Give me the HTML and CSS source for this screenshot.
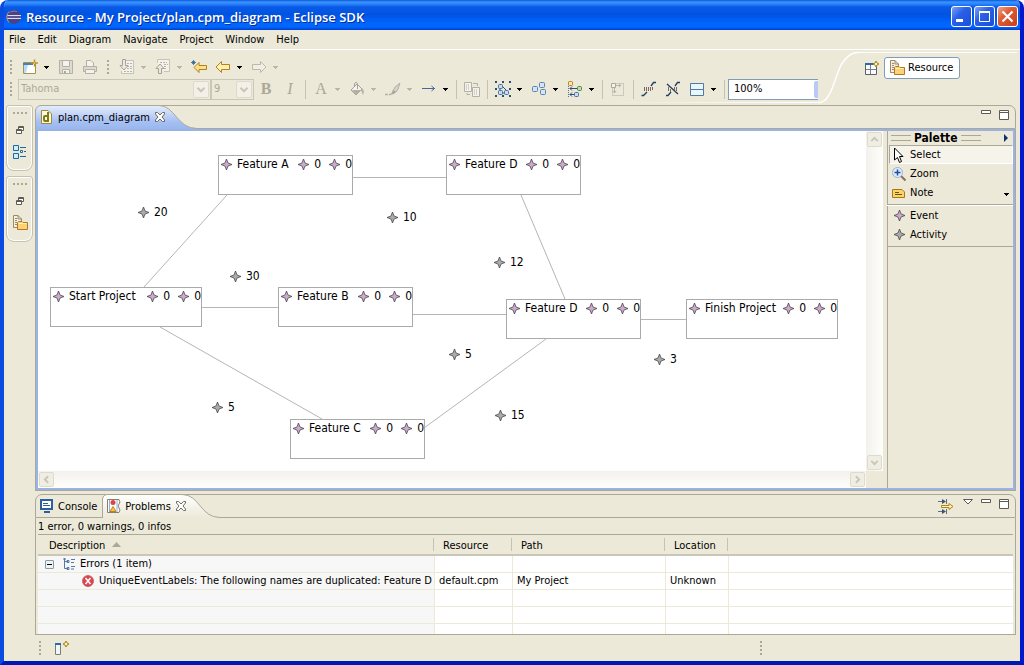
FILE: index.html
```html
<!DOCTYPE html>
<html lang="en">
<head>
    <meta charset="UTF-8">
    <meta name="viewport" content="width=device-width, initial-scale=1.0">
    <title>Resource - My Project/plan.cpm_diagram - Eclipse SDK</title>
    <link rel="stylesheet" href="styles.css">
</head>
<body>
    <!-- shared icons -->
    <svg class="sprite" aria-hidden="true">
        <symbol id="star" viewBox="0 0 11 11">
            <path d="M5.5 0L7 4L11 5.5L7 7L5.5 11L4 7L0 5.5L4 4Z" fill="currentColor" stroke="#4a464c" stroke-width="0.8"/>
            <path d="M5.5 3L8 5.5L5.5 8L3 5.5Z" fill="currentColor"/>
        </symbol>
        <symbol id="drop" viewBox="0 0 5 3">
            <path d="M0 0H5V1H4V2H3V3H2V2H1V1H0Z" fill="currentColor"/>
        </symbol>
        <symbol id="chevron" viewBox="0 0 16 16">
            <path d="M4 6L8 10L12 6" fill="none" stroke="currentColor" stroke-width="2.4"/>
        </symbol>
        <symbol id="close" viewBox="0 0 12 12">
            <path d="M1.5 1.5H3.5L6 4L8.5 1.5H10.5V3L8 6L10.5 9V10.5H8.5L6 8L3.5 10.5H1.5V9L4 6L1.5 3Z" fill="#fff" stroke="#5d5c52" stroke-width="0.9"/>
        </symbol>
        <symbol id="min" viewBox="0 0 10 4">
            <path d="M0.5 0.5H9.5V3.5H0.5Z" fill="#fff" stroke="#5d5c52"/>
        </symbol>
        <symbol id="max" viewBox="0 0 10 10">
            <path d="M0.5 0.5H9.5V9.5H0.5ZM0.5 2.5H9.5" fill="#fff" stroke="#5d5c52"/>
        </symbol>
        <symbol id="restore" viewBox="0 0 8 8">
            <path d="M2.5 0.5H7.5V4.5H2.5ZM2.5 1.5H7.5" fill="#fff" stroke="#5d5c52"/>
            <path d="M0.5 3.5H5.5V7.5H0.5ZM0.5 4.5H5.5" fill="#fff" stroke="#5d5c52"/>
        </symbol>
        <symbol id="resource" viewBox="0 0 16 16">
            <path d="M1.5 0.5H6L9.5 4V12.5H1.5Z" fill="#f4efdf" stroke="#a18a56"/>
            <path d="M6 0.5V4H9.5M3 3.5H5M3 5.5H5M3 7.5H5M3 9.5H5" fill="none" stroke="#8d8a80"/>
            <path d="M5.5 7.500L6.500 6.500H10L11 7.500H15.500V14.500H5.500Z" fill="#fbd375" stroke="#b3772a"/>
            <path d="M6.500 8.500H14.500" stroke="#fff0b8"/>
        </symbol>
    </svg>

    <div class="window">
        <header class="titlebar">
            <svg class="logo" viewBox="0 0 16 16">
                <circle cx="8" cy="8" r="7" fill="#4a4383"/>
                <path d="M3 4A7 7 0 0 1 12 3Q7 1 3 4Z" fill="#b5b0d8"/>
                <path d="M1 6.500H15M1 9.500H15" stroke="#dcdcf0"/>
                <path d="M1 8H15" stroke="#6c639f"/>
                <path d="M3 2.500A8 8 0 0 0 3 13.500" fill="none" stroke="#c28b8a"/>
            </svg>
            <h1>Resource - My Project/plan.cpm_diagram - Eclipse SDK</h1>
            <div class="window-buttons">
                <button aria-label="Minimize"><svg viewBox="0 0 19 19"><path d="M4 12H11V15H4Z" fill="#fff"/></svg></button>
                <button aria-label="Maximize"><svg viewBox="0 0 19 19"><path d="M4.500 5H14.500V14.500H4.500Z" fill="none" stroke="#fff"/><path d="M4 5H15" stroke="#fff" stroke-width="2"/></svg></button>
                <button class="close" aria-label="Close"><svg viewBox="0 0 19 19"><path d="M4.500 4.500L14.500 14.500M14.500 4.500L4.500 14.500" stroke="#fff" stroke-width="2.200"/></svg></button>
            </div>
        </header>

        <nav class="menubar">
            <a href="#">File</a>
            <a href="#">Edit</a>
            <a href="#">Diagram</a>
            <a href="#">Navigate</a>
            <a href="#">Project</a>
            <a href="#">Window</a>
            <a href="#">Help</a>
        </nav>

        <div class="coolbar">
            <div class="toolbars">
                <div class="toolbar">
                    <span class="grip"></span>
                    <button class="tool" aria-label="New">
                        <svg viewBox="0 0 16 16"><path d="M1.500 3.500H13.500V14.500H1.500Z" fill="#fff" stroke="#a5914c"/><path d="M1 4H11V6H1Z" fill="#3f82c4"/><path d="M2 6H6L4 14H2Z" fill="#b7dcf5"/><path d="M12.500 0.500V7.500M9 4H16" stroke="#c09222" stroke-width="1.500"/><path d="M12 3.500H13V4.500H12Z" fill="#fff3ae"/></svg>
                    </button>
                    <button class="arrow" aria-label="New menu"><svg><use href="#drop"/></svg></button>
                    <button class="tool off" aria-label="Save" disabled>
                        <svg viewBox="0 0 16 16"><path d="M1.500 1.500H14.500V14.500H1.500Z" fill="#dddbd0" stroke="#b3b1a6"/><path d="M4.500 1.500H11.500V7.500H4.500Z" fill="#f3f2ec" stroke="#b3b1a6"/><path d="M4.500 10.500H11.500V14.500H4.500Z" fill="#f3f2ec" stroke="#b3b1a6"/><path d="M6 12H8V14H6Z" fill="#a9a79c"/></svg>
                    </button>
                    <button class="tool off" aria-label="Print" disabled>
                        <svg viewBox="0 0 16 16"><path d="M4.500 7.500V1.500H9L11.500 4V7.500Z" fill="#f3f2ec" stroke="#b3b1a6"/><path d="M1.500 7.500H14.500V12.500H1.500Z" fill="#dddbd0" stroke="#b3b1a6"/><path d="M3.500 10.500H12.500V14.500H3.500Z" fill="#f3f2ec" stroke="#b3b1a6"/></svg>
                    </button>
                    <span class="grip mid"></span>
                    <button class="tool off" aria-label="Next annotation" disabled>
                        <svg viewBox="0 0 16 16"><path d="M5.500 1.500H14.500V14.500H2.500V12" fill="#f3f2ec" stroke="#c5c2b6"/><path d="M8 4.500H13M8 7.500H13M8 9.500H13M5 12.500H13" stroke="#b8b5a8" stroke-dasharray="2 1"/><path d="M3.500 0.500H6.500V6.500H9L5 11L1 6.500H3.500Z" fill="#eceadf" stroke="#a5a398"/></svg>
                    </button>
                    <button class="arrow off" aria-label="Next annotation menu" disabled><svg><use href="#drop"/></svg></button>
                    <button class="tool off" aria-label="Previous annotation" disabled>
                        <svg viewBox="0 0 16 16"><path d="M2.500 4V0.500H14.500V12.500H9" fill="#f3f2ec" stroke="#c5c2b6"/><path d="M5 3.500H12M9 5.500H13M9 7.500H12M9 9.500H12" stroke="#b8b5a8" stroke-dasharray="2 1"/><path d="M3.500 14.500V9.500H1L5 5L9 9.500H6.500V14.500Z" fill="#eceadf" stroke="#a5a398"/></svg>
                    </button>
                    <button class="arrow off" aria-label="Previous annotation menu" disabled><svg><use href="#drop"/></svg></button>
                    <button class="tool" aria-label="Last edit location">
                        <svg viewBox="0 0 16 16"><path d="M3 8.500L8 3.500V6.500H15.500V10.500H8V13.500Z" fill="#fde18a" stroke="#b3811e"/><path d="M2.500 1V6M0 3.500H5M1 2L4 5M4 2L1 5" stroke="#27618f" stroke-width="0.800"/></svg>
                    </button>
                    <button class="tool" aria-label="Back">
                        <svg viewBox="0 0 16 16"><path d="M1 8L6.500 2.500V5.500H14.500V10.500H6.500V13.500Z" fill="#fdf0b0" stroke="#b3811e"/></svg>
                    </button>
                    <button class="arrow" aria-label="Back menu"><svg><use href="#drop"/></svg></button>
                    <button class="tool off" aria-label="Forward" disabled>
                        <svg viewBox="0 0 16 16"><path d="M15 8L9.500 2.500V5.500H1.500V10.500H9.500V13.500Z" fill="#f0eee5" stroke="#bbb8ac"/></svg>
                    </button>
                    <button class="arrow off" aria-label="Forward menu" disabled><svg><use href="#drop"/></svg></button>
                </div>

                <div class="toolbar">
                    <span class="grip"></span>
                    <div class="combo font">
                        <select aria-label="Font" disabled><option>Tahoma</option></select>
                        <svg><use href="#chevron"/></svg>
                    </div>
                    <div class="combo size">
                        <select aria-label="Font size" disabled><option>9</option></select>
                        <svg><use href="#chevron"/></svg>
                    </div>
                    <button class="tool glyph bold" disabled>B</button>
                    <button class="tool glyph italic" disabled>I</button>
                    <span class="separator"></span>
                    <button class="tool glyph" disabled>A</button>
                    <button class="arrow off" aria-label="Font color menu" disabled><svg><use href="#drop"/></svg></button>
                    <button class="tool off" aria-label="Fill color" disabled>
                        <svg viewBox="0 0 16 16"><path d="M2 9L8 3L13 8L7 14Z" fill="#f3f2ec" stroke="#a5a398"/><path d="M5.500 6V2.500Q7 0 8.500 2.500V8" fill="none" stroke="#a5a398"/><path d="M3 9H12L7 14ZM13 7Q16 10 14 14L12 9Z" fill="#b3b1a6"/></svg>
                    </button>
                    <button class="arrow off" aria-label="Fill color menu" disabled><svg><use href="#drop"/></svg></button>
                    <button class="tool off" aria-label="Line color" disabled>
                        <svg viewBox="0 0 16 16"><path d="M15 2L10 6L8 10L11 11L13 8Z" fill="#d6d4c9" stroke="#b3b1a6"/><path d="M8 9L11 11Q9 14 5 13.500Q7 12 8 9Z" fill="#aaa89d"/><path d="M0 13.500H3M4 13.500H6" stroke="#b3b1a6" stroke-width="1.500"/></svg>
                    </button>
                    <button class="arrow off" aria-label="Line color menu" disabled><svg><use href="#drop"/></svg></button>
                    <button class="tool" aria-label="Line style">
                        <svg viewBox="0 0 16 16"><path d="M1 7.500H14M10.500 5L13.500 7.500L10.500 10" fill="none" stroke="#4a679a"/></svg>
                    </button>
                    <button class="arrow" aria-label="Line style menu"><svg><use href="#drop"/></svg></button>
                    <span class="separator"></span>
                    <button class="tool off" aria-label="Copy appearance" disabled>
                        <svg viewBox="0 0 16 16"><path d="M0.500 1.500H7.500V10.500H0.500ZM8.500 6.500H15.500V15.500H8.500Z" fill="#f3f2ec" stroke="#b3b1a6"/><path d="M2 4H6M2 6H6M2 8H6M10 9H14M10 11H14M10 13H14" stroke="#b3b1a6" stroke-dasharray="1 1"/><path d="M9 2.500H13.500V5M3 12V13.500H6" fill="none" stroke="#b3b1a6"/></svg>
                    </button>
                    <span class="separator"></span>
                    <button class="tool" aria-label="Select all">
                        <svg viewBox="0 0 16 16"><path d="M1 0V16M15 0V16M0 1H16M0 15H16" stroke="#304f70" stroke-width="2" stroke-dasharray="2 5"/><path d="M5 6V11M7 5L14 12M6 12H10" stroke="#304f70"/><rect x="3.500" y="3.500" width="4" height="4" rx="1" fill="#c4dcf5" stroke="#4471a0"/><rect x="3.500" y="9.500" width="4" height="4" rx="1" fill="#c4dcf5" stroke="#4471a0"/><rect x="9.500" y="9.500" width="4" height="4" rx="1" fill="#c4dcf5" stroke="#4471a0"/></svg>
                    </button>
                    <button class="arrow" aria-label="Select menu"><svg><use href="#drop"/></svg></button>
                    <button class="tool" aria-label="Arrange all">
                        <svg viewBox="0 0 16 16" fill="#d3e5f8" stroke="#5b82b0"><rect x="1.500" y="5.500" width="5" height="5" rx="1"/><rect x="8.500" y="1.500" width="5" height="5" rx="1"/><rect x="9.500" y="8.500" width="5" height="5" rx="1"/></svg>
                    </button>
                    <button class="arrow" aria-label="Arrange menu"><svg><use href="#drop"/></svg></button>
                    <button class="tool" aria-label="Align">
                        <svg viewBox="0 0 16 16"><path d="M1.500 1V16" stroke="#5a7694" stroke-dasharray="1 1"/><rect x="1.500" y="0.500" width="4" height="4" rx="1" fill="#ffe9a5" stroke="#b3811e"/><path d="M3 7.500H10M5 5.500L3 7.500L5 9.500M3 13.500H8M5 11.500L3 13.500L5 15.500" fill="none" stroke="#304f70"/><rect x="10.500" y="5.500" width="4" height="4" rx="1" fill="#b9e0a8" stroke="#548a48"/><rect x="7.500" y="11.500" width="4" height="4" rx="1" fill="#c4dcf5" stroke="#4471a0"/></svg>
                    </button>
                    <button class="arrow" aria-label="Align menu"><svg><use href="#drop"/></svg></button>
                    <span class="separator"></span>
                    <button class="tool off" aria-label="Auto size" disabled>
                        <svg viewBox="0 0 16 16"><path d="M2.500 2.500H13.500V14.500H2.500Z" fill="none" stroke="#aaa89d" stroke-dasharray="1 1"/><path d="M6 4.500H11M9 3L11 4.500L9 6M4.500 7V12M3 10L4.500 12L6 10" fill="none" stroke="#b8b5a8"/><path d="M1.500 2.500H5.500V6.500H1.500Z" fill="#f3f2ec" stroke="#aaa89d"/></svg>
                    </button>
                    <span class="separator"></span>
                    <button class="tool" aria-label="Show connector labels">
                        <svg viewBox="0 0 16 16"><path d="M0.500 14.500H2.500L6 11M10 5L12.500 1.500H15" fill="none" stroke="#223f66" stroke-width="1.300"/><path d="M3.500 6V10M5.500 6V10M7.500 6V10M9.500 6V10M11.500 6V9" stroke="#7b6660"/></svg>
                    </button>
                    <button class="tool" aria-label="Hide connector labels">
                        <svg viewBox="0 0 16 16"><path d="M1 14.500H3L6 11M10 5L12.500 1.500H15M2 3L13 13" fill="none" stroke="#223f66" stroke-width="1.300"/><path d="M3.500 6V10M5.500 8V11M9.500 6V9M11.500 6V10" stroke="#7b6660"/></svg>
                    </button>
                    <button class="tool" aria-label="Compartments">
                        <svg viewBox="0 0 16 16"><path d="M1.500 2.500H14.500V14.500H1.500Z" fill="#e6f7fd" stroke="#58799c"/><path d="M2 8.500H14" stroke="#58799c"/></svg>
                    </button>
                    <button class="arrow" aria-label="Compartments menu"><svg><use href="#drop"/></svg></button>
                    <span class="separator"></span>
                    <div class="zoom">
                        <input type="text" aria-label="Zoom level" value="100%">
                        <button aria-label="Zoom levels"></button>
                    </div>
                </div>
            </div>

            <svg class="curve" viewBox="0 0 40 55"><path d="M0 52.500H2C14 52 18 20 25 12C30 5 34 2.500 40 2.500" fill="none" stroke="#fff" stroke-width="1.500"/></svg>
            <div class="perspectives">
                <button class="tool" aria-label="Open perspective">
                    <svg viewBox="0 0 16 16"><path d="M1.500 3.500H12.500V14.500H1.500Z" fill="#f7fbff" stroke="#5d6064"/><path d="M1 4H10" stroke="#2c6ba8" stroke-width="2"/><path d="M6.500 5V14M2 9.500H12" stroke="#7c8087"/><path d="M12 1L13 3L15 4L13 5L12 7L11 5L9 4L11 3Z" fill="#fff3ae" stroke="#a9811a"/></svg>
                </button>
                <button class="perspective"><svg><use href="#resource"/></svg>Resource</button>
            </div>
        </div>

        <main class="workbench">
            <aside class="fastview">
                <div class="stack">
                    <span class="grip flat"></span>
                    <button aria-label="Restore outline"><svg class="icon8"><use href="#restore"/></svg></button>
                    <button aria-label="Outline">
                        <svg class="icon16" viewBox="0 0 16 16"><path d="M1.500 1.500H6.500V6.500H1.500ZM1.500 9.500H6.500V14.500H1.500Z" fill="#c9f0fb" stroke="#1c68a0"/><path d="M8.500 6.500H10.500V8.500H8.500Z" fill="#fff" stroke="#1c68a0"/><path d="M8 3.500H14M12 7.500H14M8 12.500H14" stroke="#1c68a0"/></svg>
                    </button>
                </div>
                <div class="stack">
                    <span class="grip flat"></span>
                    <button aria-label="Restore navigator"><svg class="icon8"><use href="#restore"/></svg></button>
                    <button aria-label="Navigator"><svg class="icon16"><use href="#resource"/></svg></button>
                </div>
            </aside>

            <div class="parts">
                <section class="editor">
                    <div class="tabs">
                        <div class="tab">
                            <svg class="tab-shape" viewBox="0 0 162 24">
                                <defs>
                                    <linearGradient id="activeTab" x1="0" y1="0" x2="0" y2="1">
                                        <stop offset="0" stop-color="#e6eefc"/>
                                        <stop offset="0.700" stop-color="#a5bff2"/>
                                        <stop offset="1" stop-color="#99b7ee"/>
                                    </linearGradient>
                                </defs>
                                <path d="M0.500 24V6Q1 0.500 7 0.500H124C140 0.500 142 23.500 162 23.500V24Z" fill="url(#activeTab)"/>
                                <path d="M0.500 24V6Q1 0.500 7 0.500H124C140 0.500 142 23.500 162 23.500" fill="none" stroke="#aca899"/>
                            </svg>
                            <svg class="icon16" viewBox="0 0 16 16"><path d="M2.500 1.500H9L12.500 5V14.500H2.500Z" fill="#fdf9de" stroke="#9a8b35"/><path d="M9 3V13" stroke="#7d7b1d" stroke-width="2"/><path d="M9 7H6Q5 7 5 8V11Q5 12 6 12H9" fill="none" stroke="#7d7b1d" stroke-width="2"/></svg>
                            <span>plan.cpm_diagram</span>
                            <button aria-label="Close editor"><svg class="icon12"><use href="#close"/></svg></button>
                        </div>
                        <div class="tab-actions">
                            <button aria-label="Minimize editor"><svg class="min"><use href="#min"/></svg></button>
                            <button aria-label="Maximize editor"><svg class="max"><use href="#max"/></svg></button>
                        </div>
                    </div>

                    <div class="editor-body">
                        <div class="viewport">
                            <div class="canvas">
                                <svg class="links" width="828" height="340">
                                    <path d="M315 46.500H408M163 176.500H240M374 183.500H468M603 188.500H648"/>
                                    <path d="M189 64L106 156M483 64L527 168M122 196L284 288M508 208L386 297"/>
                                </svg>

                                <div class="node wide start"><svg><use href="#star"/></svg><span class="name">Start Project</span><svg><use href="#star"/></svg><span class="num">0</span><svg><use href="#star"/></svg><span>0</span></div>
                                <div class="node feature-a"><svg><use href="#star"/></svg><span class="name">Feature A</span><svg><use href="#star"/></svg><span class="num">0</span><svg><use href="#star"/></svg><span>0</span></div>
                                <div class="node feature-b"><svg><use href="#star"/></svg><span class="name">Feature B</span><svg><use href="#star"/></svg><span class="num">0</span><svg><use href="#star"/></svg><span>0</span></div>
                                <div class="node feature-c"><svg><use href="#star"/></svg><span class="name">Feature C</span><svg><use href="#star"/></svg><span class="num">0</span><svg><use href="#star"/></svg><span>0</span></div>
                                <div class="node feature-d1"><svg><use href="#star"/></svg><span class="name">Feature D</span><svg><use href="#star"/></svg><span class="num">0</span><svg><use href="#star"/></svg><span>0</span></div>
                                <div class="node feature-d2"><svg><use href="#star"/></svg><span class="name">Feature D</span><svg><use href="#star"/></svg><span class="num">0</span><svg><use href="#star"/></svg><span>0</span></div>
                                <div class="node wide finish"><svg><use href="#star"/></svg><span class="name">Finish Project</span><svg><use href="#star"/></svg><span class="num">0</span><svg><use href="#star"/></svg><span>0</span></div>

                                <div class="activity start-a"><svg><use href="#star"/></svg>20</div>
                                <div class="activity a-d"><svg><use href="#star"/></svg>10</div>
                                <div class="activity start-b"><svg><use href="#star"/></svg>30</div>
                                <div class="activity d-d"><svg><use href="#star"/></svg>12</div>
                                <div class="activity b-d"><svg><use href="#star"/></svg>5</div>
                                <div class="activity d-finish"><svg><use href="#star"/></svg>3</div>
                                <div class="activity start-c"><svg><use href="#star"/></svg>5</div>
                                <div class="activity c-d"><svg><use href="#star"/></svg>15</div>
                            </div>
                            <div class="scroll vertical">
                                <button class="up" aria-label="Scroll up"><svg><use href="#chevron"/></svg></button>
                                <button aria-label="Scroll down"><svg><use href="#chevron"/></svg></button>
                            </div>
                            <div class="scroll horizontal">
                                <button class="left" aria-label="Scroll left"><svg><use href="#chevron"/></svg></button>
                                <button class="right" aria-label="Scroll right"><svg><use href="#chevron"/></svg></button>
                            </div>
                        </div>

                        <aside class="palette">
                            <div class="palette-title">
                                <span class="lines"></span>
                                <h2>Palette</h2>
                                <span class="lines"></span>
                                <button aria-label="Collapse palette"><svg viewBox="0 0 4 8"><path d="M0 0L4 4L0 8Z" fill="#0d2f6b"/></svg></button>
                            </div>
                            <div class="drawer">
                                <button class="entry selected">
                                    <svg viewBox="0 0 16 16"><path d="M3.500 1V13L6.500 10.500L8.500 15.500L10.500 14.500L8.500 9.500H12Z" fill="#fff" stroke="#000"/></svg>
                                    Select
                                </button>
                                <button class="entry">
                                    <svg viewBox="0 0 16 16"><path d="M10 10L14.500 14.500" stroke="#8c6d5e" stroke-width="2"/><circle cx="6.500" cy="6.500" r="5" fill="#deecfb" stroke="#9db1cf"/><path d="M6.500 3.500V9.500M3.500 6.500H9.500" stroke="#1d4f9c" stroke-width="1.500"/></svg>
                                    Zoom
                                </button>
                                <button class="entry">
                                    <svg viewBox="0 0 16 16"><path d="M1.500 4.500H11L13.500 7V12.500H1.500Z" fill="#fbd466" stroke="#a9761d"/><path d="M4 7.500H8M4 9.500H11" stroke="#6e5215"/></svg>
                                    Note
                                    <svg class="more"><use href="#drop"/></svg>
                                </button>
                            </div>
                            <div class="drawer">
                                <button class="entry event"><svg class="star"><use href="#star"/></svg>Event</button>
                                <button class="entry"><svg class="star"><use href="#star"/></svg>Activity</button>
                            </div>
                        </aside>
                    </div>
                </section>

                <section class="problems">
                    <div class="tabs">
                        <div class="tab console">
                            <svg class="icon16" viewBox="0 0 16 16"><path d="M2 2H13V11H2Z" fill="#fff" stroke="#2d5f9e" stroke-width="2"/><path d="M4 5.500H9M4 7.500H11" stroke="#2d5f9e"/><path d="M5 14H11" stroke="#2d5f9e" stroke-width="2"/></svg>
                            <span>Console</span>
                        </div>
                        <div class="tab">
                            <svg class="tab-shape" viewBox="0 0 118 24">
                                <defs>
                                    <linearGradient id="viewTab" x1="0" y1="0" x2="0" y2="1">
                                        <stop offset="0" stop-color="#fff"/>
                                        <stop offset="1" stop-color="#ece9d8"/>
                                    </linearGradient>
                                </defs>
                                <path d="M0.500 24V5Q1 0.500 6 0.500H80C98 0.500 98 23.500 118 23.500V24Z" fill="url(#viewTab)"/>
                                <path d="M0.500 24V5Q1 0.500 6 0.500H80C98 0.500 98 23.500 118 23.500" fill="none" stroke="#aca899"/>
                            </svg>
                            <svg class="icon16" viewBox="0 0 16 16"><path d="M1.500 1.500H13L14 4L12 8L14 12L13 14.500H1.500Z" fill="#fff" stroke="#8a7d6a"/><path d="M3.500 2V14M11 2V14" stroke="#8fb1d6"/><circle cx="7" cy="4.500" r="2.500" fill="#d84646"/><path d="M7 8.500L10 13.500H4Z" fill="#fbc345" stroke="#b98323"/></svg>
                            <span>Problems</span>
                            <button aria-label="Close problems"><svg class="icon12"><use href="#close"/></svg></button>
                        </div>
                        <div class="tab-actions">
                            <button aria-label="Configure filters">
                                <svg class="icon16" viewBox="0 0 16 16"><path d="M0 2.500H5M0 12.500H5M8.500 0V5M8.500 10V15" stroke="#4e7691"/><path d="M4 0L8 2.500L4 5ZM4 10L8 12.500L4 15Z" fill="#3f5566"/><path d="M3.500 6.500H11V4.500L15 7.500L11 10.500V8.500H3.500Z" fill="#fff3ae" stroke="#b3811e"/></svg>
                            </button>
                            <button aria-label="View menu"><svg class="menu-arrow" viewBox="0 0 10 6"><path d="M0.500 0.500H9.500L5 5Z" fill="#fff" stroke="#5d5c52"/></svg></button>
                            <button aria-label="Minimize view"><svg class="min"><use href="#min"/></svg></button>
                            <button aria-label="Maximize view"><svg class="max"><use href="#max"/></svg></button>
                        </div>
                    </div>
                    <p class="summary">1 error, 0 warnings, 0 infos</p>
                    <div class="table-wrap">
                        <table>
                            <thead>
                                <tr>
                                    <th class="description">Description <svg viewBox="0 0 9 5"><path d="M4.500 0L9 5H0Z" fill="#aca899"/></svg></th>
                                    <th class="resource">Resource</th>
                                    <th class="path">Path</th>
                                    <th class="location">Location</th>
                                    <th></th>
                                </tr>
                            </thead>
                            <tbody>
                                <tr>
                                    <td>
                                        <div class="group">
                                            <button class="toggle" aria-label="Collapse"></button>
                                            <svg viewBox="0 0 12 12"><path d="M1.500 0V10.500H5M1.500 3.500H5" fill="none" stroke="#5578a8"/><path d="M0 1H3M4 2.500H6V4.500H4ZM4 9.500H6V11.500H4ZM8 1.500H12M8 4.500H11M8 8.500H12M8 11H11" fill="none" stroke="#5578a8"/></svg>
                                            Errors (1 item)
                                        </div>
                                    </td>
                                    <td></td><td></td><td></td><td></td>
                                </tr>
                                <tr>
                                    <td>
                                        <div class="item">
                                            <svg viewBox="0 0 12 12"><circle cx="6" cy="6" r="5.500" fill="#d9484e" stroke="#c9505a" stroke-width="0.800"/><path d="M3.500 3L8.500 9M8.500 3L3.500 9" stroke="#fff" stroke-width="1.500"/></svg>
                                            UniqueEventLabels: The following names are duplicated: Feature D
                                        </div>
                                    </td>
                                    <td>default.cpm</td><td>My Project</td><td>Unknown</td><td></td>
                                </tr>
                                <tr><td></td><td></td><td></td><td></td><td></td></tr>
                                <tr><td></td><td></td><td></td><td></td><td></td></tr>
                                <tr><td></td><td></td><td></td><td></td><td></td></tr>
                            </tbody>
                        </table>
                    </div>
                </section>
            </div>
        </main>

        <footer class="statusbar">
            <div class="status-left">
                <span class="grip"></span>
                <button aria-label="Show view as fast view">
                    <svg class="icon16" viewBox="0 0 16 16"><path d="M1.500 3.500H6.500V14.500H1.500Z" fill="#eef7fd" stroke="#7c7c70"/><path d="M1 4H7" stroke="#2c6ba8" stroke-width="2"/><path d="M12 1L13 3L15 4L13 5L12 7L11 5L9 4L11 3Z" fill="#fff3ae" stroke="#a9811a"/></svg>
                </button>
            </div>
            <div class="status-right"><span class="grip"></span></div>
        </footer>
    </div>
</body>
</html>
```
FILE: styles.css
```css
* {
    box-sizing: border-box;
}
body {
    margin: 0;
    font-family: "DejaVu Sans Condensed", Tahoma, "DejaVu Sans", sans-serif;
    font-size: 11px;
    line-height: 14px;
    color: #000;
    background-color: #fff;
}
button {
    margin: 0;
    padding: 0;
    border: none;
    background: none;
    font: inherit;
    color: inherit;
}
svg {
    display: block;
    flex: none;
}
a {
    color: inherit;
    text-decoration: none;
}
.sprite {
    position: absolute;
    width: 0;
    height: 0;
}
.icon16 {
    width: 16px;
    height: 16px;
}
.icon12 {
    width: 12px;
    height: 12px;
}
.icon8 {
    width: 8px;
    height: 8px;
}

/* window frame */
.window {
    display: flex;
    flex-direction: column;
    min-height: 100vh;
    border: solid;
    border-width: 0 4px 4px;
    border-color: #0019cf #0019cf #0019b4 #0a4be0;
    border-radius: 8px 8px 0 0;
    overflow: hidden;
    background-color: #ece9d8;
}
.titlebar {
    display: flex;
    align-items: center;
    height: 30px;
    margin: 0 -4px;
    padding: 3px 6px 0;
    background: linear-gradient(#0a57d8 0, #3c93ff 2px, #2a84fb 4px, #0a5ae6 7px, #0053e1 14px, #0058ee 18px, #0068ff 24px, #0066fc 27px, #003dd0 30px);
}
.logo {
    width: 16px;
    height: 16px;
}
.titlebar h1 {
    flex: 1;
    margin: 0 0 0 4px;
    font-family: "Open Sans", "Trebuchet MS", sans-serif;
    font-size: 13px;
    font-weight: 600;
    line-height: 18px;
    color: #fff;
    text-shadow: 1px 1px #0a2f93;
    white-space: nowrap;
}
.window-buttons {
    display: flex;
    gap: 2px;
}
.window-buttons button {
    width: 21px;
    height: 21px;
    border: 1px solid #fff;
    border-radius: 3px;
    background: linear-gradient(135deg, #7ba2f5, #2a60e8 40%, #1a4fd8);
}
.window-buttons .close {
    background: linear-gradient(135deg, #f0a48c, #e05a34 40%, #c8401a);
}
.menubar {
    display: flex;
    gap: 12px;
    height: 20px;
    padding: 3px 5px 0;
    border-bottom: 1px solid #fff;
}

/* toolbars */
.coolbar {
    display: flex;
    height: 55px;
}
.toolbars {
    position: relative;
    padding-top: 6px;
}
.toolbars::after {
    content: "";
    position: absolute;
    right: 0;
    bottom: 2px;
    width: 220px;
    height: 1px;
    background: linear-gradient(90deg, #ece9d8, #fff);
}
.toolbar {
    display: flex;
    align-items: center;
    height: 22px;
    padding-left: 6px;
}
.grip {
    width: 2px;
    height: 14px;
    margin-right: 6px;
    background: repeating-linear-gradient(#aca899 0, #aca899 2px, transparent 2px, transparent 4px);
}
.grip.mid {
    margin: 0 6px 0 5px;
}
.grip.flat {
    width: 14px;
    height: 2px;
    margin: 0;
    background: repeating-linear-gradient(90deg, #aca899 0, #aca899 2px, transparent 2px, transparent 4px);
}
.tool {
    display: flex;
    align-items: center;
    justify-content: center;
    width: 24px;
    height: 22px;
}
.tool svg {
    width: 16px;
    height: 16px;
}
.arrow {
    width: 12px;
    height: 22px;
}
.arrow svg {
    width: 5px;
    height: 3px;
    margin-left: 2px;
}
.arrow.off {
    color: #b8b5a8;
}
.glyph {
    font-family: "Liberation Serif", "Times New Roman", serif;
    font-size: 16px;
    color: #aca899;
}
.bold {
    font-weight: bold;
}
.italic {
    font-style: italic;
}
.separator {
    width: 1px;
    height: 19px;
    margin: 0 3px;
    background-color: #c5c2b2;
}
.combo {
    position: relative;
    height: 21px;
    border: 1px solid #c9c7ba;
    background-color: #ece9d8;
}
.combo select {
    appearance: none;
    width: 100%;
    height: 19px;
    padding: 0 2px;
    border: none;
    background: none;
    font: inherit;
    color: #aca899;
    opacity: 1;
}
.combo svg {
    position: absolute;
    top: 1px;
    right: 1px;
    width: 16px;
    height: 17px;
    border: 1px solid #dddacd;
    border-radius: 2px;
    background-color: #f3f1e7;
    color: #c9c7ba;
}
.font {
    width: 193px;
}
.size {
    width: 43px;
}
.zoom {
    display: flex;
    width: 90px;
    height: 21px;
    border: 1px solid #7f9db9;
    border-right: none;
    background-color: #fff;
}
.zoom input {
    flex: 1;
    min-width: 0;
    padding: 0 5px;
    border: none;
    background: none;
    font: inherit;
}
.zoom button {
    width: 4px;
    margin: 1px 0;
    border-radius: 2px 0 0 2px;
    background-color: #b9cbf5;
}
.curve {
    width: 40px;
    height: 55px;
}
.perspectives {
    display: flex;
    flex: 1;
    align-items: flex-start;
    height: 53px;
    margin: 2px 3px 0 0;
    padding: 4px 0 0 2px;
    border-top: 1px solid #fff;
}
.perspective {
    display: flex;
    align-items: center;
    gap: 3px;
    height: 22px;
    padding: 0 6px 0 4px;
    border: 1px solid #7f9db9;
    border-radius: 3px;
    background-color: #fff;
}
.perspective svg {
    width: 16px;
    height: 16px;
}

/* workbench */
.workbench {
    display: flex;
    flex: 1;
}
.fastview {
    display: flex;
    flex-direction: column;
    gap: 5px;
    width: 31px;
    padding-left: 2px;
}
.stack {
    display: flex;
    flex-direction: column;
    align-items: center;
    gap: 12px;
    width: 27px;
    height: 66px;
    padding-top: 6px;
    border: 1px solid #c5c2b2;
    border-radius: 3px 3px 8px 8px;
    box-shadow: inset 0 0 0 1px #fff;
}
.stack button + button {
    margin-top: -2px;
}
.parts {
    display: flex;
    flex: 1;
    flex-direction: column;
    gap: 3px;
    min-width: 0;
    padding-right: 4px;
}
.tabs {
    display: flex;
    height: 24px;
    border: 1px solid #aca899;
    border-radius: 7px 7px 0 0;
}
.tab {
    position: relative;
    display: flex;
    align-items: center;
    height: 24px;
    margin: -1px 0 0 -1px;
    padding-left: 4px;
}
.tab > * {
    position: relative;
}
.tab span {
    margin: 1px 4px 0 3px;
}
.tab .tab-shape {
    position: absolute;
    top: 0;
    left: 0;
}
.editor .tab-shape {
    width: 162px;
    height: 24px;
}
.problems .tab-shape {
    width: 118px;
    height: 24px;
}
.problems .tab.console span {
    margin-right: 6px;
}
.tab-actions {
    display: flex;
    flex: 1;
    align-items: flex-start;
    justify-content: flex-end;
    gap: 8px;
    padding: 4px 6px 0 0;
}
.tab-actions .icon16 {
    margin-right: 1px;
}
.menu-arrow {
    width: 10px;
    height: 6px;
}
.min {
    width: 10px;
    height: 4px;
}
.max {
    width: 10px;
    height: 10px;
}

/* diagram editor */
.editor {
    display: flex;
    flex: 1;
    flex-direction: column;
}
.editor-body {
    display: flex;
    flex: 1;
    border: 1px solid #aca899;
    border-top: none;
    box-shadow: inset 0 0 0 2px #99b4e4;
    padding: 2px;
}
.viewport {
    display: grid;
    flex: 1;
    grid-template-columns: 1fr 17px;
    grid-template-rows: 1fr 17px;
    min-width: 0;
}
.canvas {
    position: relative;
    overflow: hidden;
    min-height: 340px;
    background-color: #fff;
    font-size: 12px;
}
.links {
    position: absolute;
    top: 0;
    left: 0;
    fill: none;
    stroke: #b5b5b5;
}
.node {
    position: absolute;
    display: flex;
    width: 135px;
    height: 40px;
    padding: 1px 0 0 2px;
    border: 1px solid #aaa;
    background-color: #fff;
    overflow: hidden;
    white-space: nowrap;
}
.node svg,
.activity svg {
    width: 11px;
    height: 11px;
    margin: 2px 5px 0 0;
    color: #cba9ca;
}
.node .name {
    width: 62px;
}
.node .num {
    width: 15px;
}
.wide {
    width: 152px;
}
.wide .name {
    width: 79px;
}
.start { left: 12px; top: 156px; }
.feature-a { left: 180px; top: 24px; }
.feature-b { left: 240px; top: 156px; }
.feature-c { left: 252px; top: 288px; }
.feature-d1 { left: 408px; top: 24px; }
.feature-d2 { left: 468px; top: 168px; }
.finish { left: 648px; top: 168px; }
.activity {
    position: absolute;
    display: flex;
}
.activity svg {
    color: #aaa;
}
.start-a { left: 100px; top: 74px; }
.a-d { left: 349px; top: 79px; }
.start-b { left: 192px; top: 138px; }
.d-d { left: 456px; top: 124px; }
.b-d { left: 411px; top: 216px; }
.d-finish { left: 616px; top: 221px; }
.start-c { left: 174px; top: 269px; }
.c-d { left: 457px; top: 277px; }

.scroll {
    display: flex;
    justify-content: space-between;
}
.scroll button {
    width: 15px;
    height: 15px;
    margin: 1px;
    border: 1px solid #dedbcd;
    border-radius: 2px;
    background-color: #f0eee3;
    color: #c9c7ba;
}
.scroll svg {
    width: 13px;
    height: 13px;
}
.vertical {
    flex-direction: column;
    background: linear-gradient(90deg, #f3f1ec, #fefefb);
}
.horizontal {
    background: linear-gradient(#f3f1ec, #fefefb);
}
.up svg {
    transform: rotate(180deg);
}
.left svg {
    transform: rotate(90deg);
}
.right svg {
    transform: rotate(-90deg);
}
.palette {
    width: 130px;
    padding-left: 4px;
    background: linear-gradient(#aca899, #aca899) 4px 0 / 1px 100% no-repeat;
}
.palette-title {
    display: flex;
    align-items: center;
    gap: 3px;
    height: 14px;
    padding: 0 5px 0 4px;
}
.palette-title h2 {
    margin: 0;
    font-size: 12px;
    font-weight: bold;
}
.lines {
    width: 20px;
    height: 6px;
    border: solid #aca899;
    border-width: 1px 0;
}
.palette-title button {
    margin-left: auto;
}
.palette-title svg {
    width: 4px;
    height: 8px;
}
.drawer {
    padding: 0 0 2px 2px;
    border-bottom: 1px solid #aca899;
}
.drawer:last-child {
    border-top: 1px solid #fff;
}
.entry {
    display: flex;
    align-items: center;
    gap: 3px;
    width: 100%;
    height: 19px;
    padding: 0 4px 0 2px;
}
.entry svg {
    width: 16px;
    height: 16px;
}
.entry .star {
    width: 11px;
    height: 11px;
    margin: 0 2px 0 3px;
    color: #aaa;
}
.event .star {
    color: #cba9ca;
}
.entry .more {
    width: 5px;
    height: 3px;
    margin: 4px 0 0 auto;
}
.selected {
    border: 1px solid;
    border-color: #aca899 #fff #fff #aca899;
    background-color: #f5f3ea;
    padding-left: 1px;
}

/* problems view */
.problems {
    display: flex;
    flex-direction: column;
}
.summary {
    margin: 0;
    height: 16px;
    padding: 2px 2px 0;
    border: solid #aca899;
    border-width: 0 1px;
}
.table-wrap {
    height: 101px;
    padding: 0 2px 2px;
    border: 1px solid #aca899;
    border-top: none;
    overflow: hidden;
}
table {
    width: 100%;
    border-collapse: separate;
    border-spacing: 0;
    border-top: 1px solid #aca899;
    table-layout: fixed;
}
th {
    height: 21px;
    padding: 2px 0 0 8px;
    border-bottom: 2px solid #cbc7b8;
    background: linear-gradient(#c5c2b2, #c5c2b2) right 1px center / 1px 13px no-repeat;
    font-weight: normal;
    text-align: left;
}
th:last-child {
    background: none;
}
th svg {
    display: inline-block;
    width: 9px;
    height: 5px;
    margin: 0 0 2px 3px;
}
.description {
    width: 397px;
    padding-left: 11px;
}
.resource {
    width: 78px;
}
.path {
    width: 153px;
}
.location {
    width: 63px;
}
td {
    height: 17px;
    padding: 0 4px;
    border: solid #ece9d8;
    border-width: 0 1px 1px 0;
    background-color: #fff;
    line-height: 16px;
    white-space: nowrap;
}
td:first-child {
    background-color: #f7f7f7;
}
td:last-child {
    border-right: none;
}
.group,
.item {
    display: flex;
    align-items: center;
    gap: 5px;
    padding-left: 3px;
}
.item {
    padding-left: 40px;
}
.group svg,
.item svg {
    width: 12px;
    height: 12px;
}
.group svg {
    margin-left: 4px;
}
.toggle {
    width: 9px;
    height: 9px;
    border: 1px solid #7f9db9;
    border-radius: 1px;
    background: linear-gradient(#000, #000) center / 5px 1px no-repeat, #f3f1ea;
}

.statusbar {
    display: flex;
    height: 26px;
}
.statusbar > div {
    display: flex;
    align-items: center;
    padding-left: 35px;
}
.status-left {
    width: 71%;
}
.status-left .grip {
    margin-right: 13px;
}
```
